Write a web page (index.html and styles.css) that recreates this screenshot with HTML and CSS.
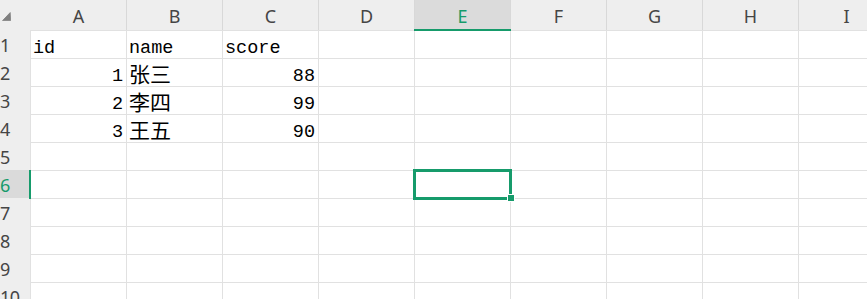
FILE: index.html
```html
<!DOCTYPE html>
<html lang="zh">
<head>
<meta charset="utf-8">
<title>Sheet</title>
<link rel="stylesheet" href="styles.css">
</head>
<body>
<div class="sheet">
  <div class="corner"><svg width="9" height="9" viewBox="0 0 9 9"><path d="M8.2 0.6 L8.6 8.6 L0.6 8.6 Z" fill="#7f7f7f" stroke="#7f7f7f" stroke-width="0.8" stroke-linejoin="round"/></svg></div>
  <div class="colhead first">A</div>
  <div class="colhead">B</div>
  <div class="colhead">C</div>
  <div class="colhead">D</div>
  <div class="colhead active">E</div>
  <div class="colhead">F</div>
  <div class="colhead">G</div>
  <div class="colhead">H</div>
  <div class="colhead">I</div>

  <div class="rowhead">1</div>
  <div class="cell">id</div><div class="cell">name</div><div class="cell">score</div><div class="cell"></div><div class="cell"></div><div class="cell"></div><div class="cell"></div><div class="cell"></div><div class="cell"></div>

  <div class="rowhead">2</div>
  <div class="cell num">1</div><div class="cell"><span class="cjk">张三</span></div><div class="cell num">88</div><div class="cell"></div><div class="cell"></div><div class="cell"></div><div class="cell"></div><div class="cell"></div><div class="cell"></div>

  <div class="rowhead">3</div>
  <div class="cell num">2</div><div class="cell"><span class="cjk">李四</span></div><div class="cell num">99</div><div class="cell"></div><div class="cell"></div><div class="cell"></div><div class="cell"></div><div class="cell"></div><div class="cell"></div>

  <div class="rowhead">4</div>
  <div class="cell num">3</div><div class="cell"><span class="cjk">王五</span></div><div class="cell num">90</div><div class="cell"></div><div class="cell"></div><div class="cell"></div><div class="cell"></div><div class="cell"></div><div class="cell"></div>

  <div class="rowhead">5</div>
  <div class="cell"></div><div class="cell"></div><div class="cell"></div><div class="cell"></div><div class="cell"></div><div class="cell"></div><div class="cell"></div><div class="cell"></div><div class="cell"></div>

  <div class="rowhead active">6</div>
  <div class="cell"></div><div class="cell"></div><div class="cell"></div><div class="cell"></div><div class="cell sel"><div class="selbox"></div><div class="handle"></div></div><div class="cell"></div><div class="cell"></div><div class="cell"></div><div class="cell"></div>

  <div class="rowhead">7</div>
  <div class="cell"></div><div class="cell"></div><div class="cell"></div><div class="cell"></div><div class="cell"></div><div class="cell"></div><div class="cell"></div><div class="cell"></div><div class="cell"></div>

  <div class="rowhead">8</div>
  <div class="cell"></div><div class="cell"></div><div class="cell"></div><div class="cell"></div><div class="cell"></div><div class="cell"></div><div class="cell"></div><div class="cell"></div><div class="cell"></div>

  <div class="rowhead">9</div>
  <div class="cell"></div><div class="cell"></div><div class="cell"></div><div class="cell"></div><div class="cell"></div><div class="cell"></div><div class="cell"></div><div class="cell"></div><div class="cell"></div>

  <div class="rowhead">10</div>
  <div class="cell"></div><div class="cell"></div><div class="cell"></div><div class="cell"></div><div class="cell"></div><div class="cell"></div><div class="cell"></div><div class="cell"></div><div class="cell"></div>
</div>
</body>
</html>
```

FILE: styles.css
```css
html, body {
  margin: 0;
  padding: 0;
  background: #ffffff;
  overflow: hidden;
}

.sheet {
  display: grid;
  grid-template-columns: 30px repeat(9, 96px);
  grid-template-rows: 30px;
  grid-auto-rows: 28px;
  width: 867px;
  height: 299px;
  overflow: hidden;
}

.corner {
  background: #eeeeee;
  padding: 12px 0 0 2px;
  box-sizing: border-box;
}

.corner svg {
  display: block;
}

.colhead {
  background: #eeeeee;
  border-left: 1px solid #d8d8d8;
  box-sizing: border-box;
  display: flex;
  justify-content: center;
  align-items: center;
  padding-top: 2px;
  font-family: "Noto Sans", sans-serif;
  font-size: 18px;
  color: #454545;
}

.colhead.first {
  border-left-color: #eeeeee;
}

.colhead.active {
  background: #dbdbdb;
  color: #169b6b;
  position: relative;
}

.colhead.active::after {
  content: "";
  position: absolute;
  left: -1px;
  right: -1px;
  bottom: -1px;
  height: 2px;
  background: #169b6b;
}

.rowhead {
  background: #eeeeee;
  display: flex;
  align-items: center;
  padding-top: 1px;
  box-sizing: border-box;
  font-family: "Noto Sans", sans-serif;
  font-size: 18px;
  color: #454545;
  letter-spacing: -0.5px;
}

.rowhead.active {
  background: #dadada;
  color: #169b6b;
  position: relative;
}

.rowhead.active::after {
  content: "";
  position: absolute;
  top: 0;
  bottom: -1px;
  right: -1px;
  width: 2px;
  background: #169b6b;
}

.cell {
  border-left: 1px solid #e1e1e1;
  border-top: 1px solid #e1e1e1;
  box-sizing: border-box;
  display: flex;
  align-items: flex-end;
  padding: 0 3px 0 2px;
  font-family: "Liberation Mono", monospace;
  font-size: 18.5px;
  line-height: 18px;
  color: #000000;
  white-space: nowrap;
}

.cell.num {
  justify-content: flex-end;
}

.cjk {
  font-family: "Noto Sans CJK SC", sans-serif;
  font-size: 21px;
  line-height: 26px;
}

.cell.sel {
  position: relative;
}

.selbox {
  position: absolute;
  left: -2px;
  top: -2px;
  width: 99px;
  height: 31px;
  border: 3px solid #169b6b;
  box-sizing: border-box;
}

.handle {
  position: absolute;
  left: 92px;
  top: 23px;
  width: 8px;
  height: 8px;
  background: #169b6b;
  border: 1px solid #ffffff;
  box-sizing: border-box;
}
```
